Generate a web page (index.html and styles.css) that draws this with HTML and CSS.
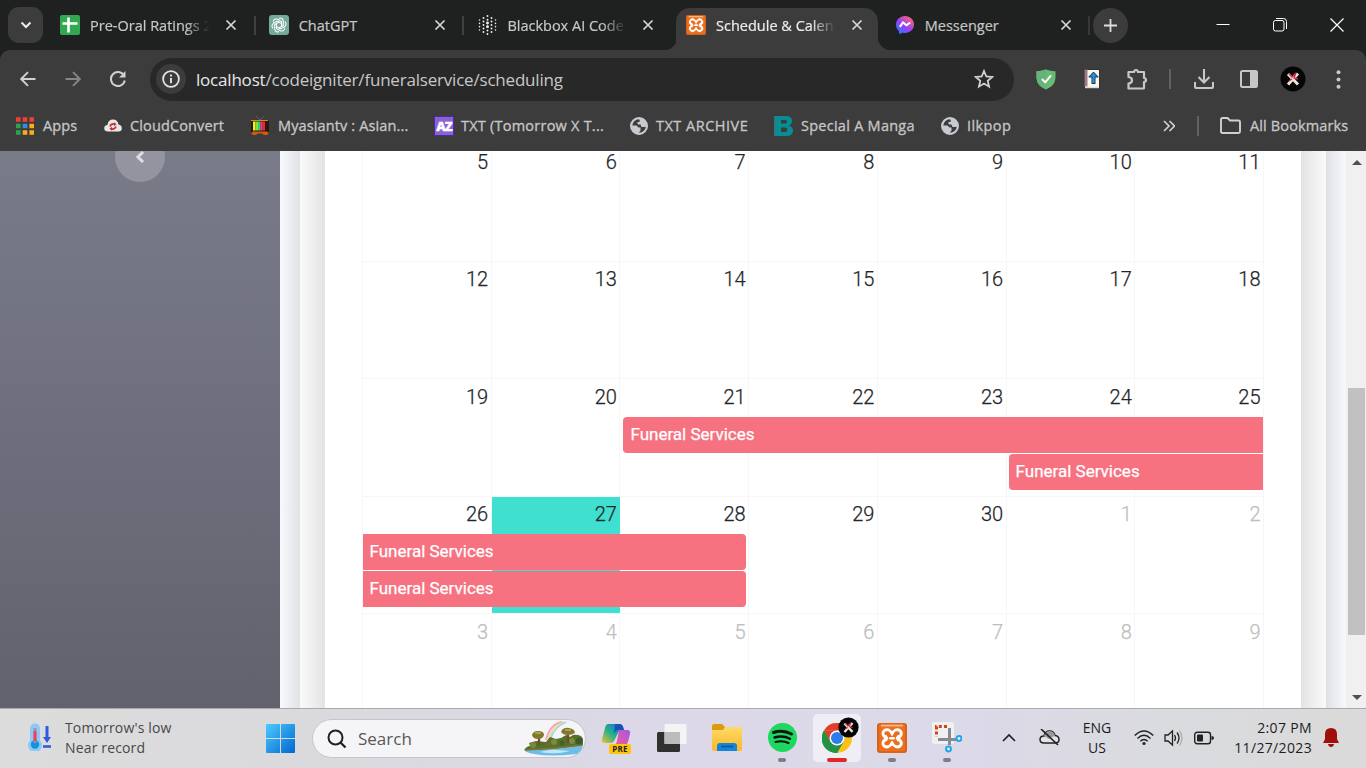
FILE: index.html
```
<!DOCTYPE html>
<html lang="en">
<head>
<meta charset="utf-8">
<title>Schedule &amp; Calendar</title>
<link rel="stylesheet" href="styles.css">
</head>
<body>
<svg width="0" height="0" class="defs">
  <defs>
    <linearGradient id="win" x1="0" y1="0" x2="1" y2="1"><stop offset="0" stop-color="#4ccaff"/><stop offset="1" stop-color="#0067cf"/></linearGradient>
    <linearGradient id="msg" x1="0" y1="1" x2=".8" y2="0"><stop offset="0" stop-color="#0a8cff"/><stop offset=".5" stop-color="#9a3dff"/><stop offset="1" stop-color="#ff6968"/></linearGradient>
    <linearGradient id="cop" x1="0" y1="1" x2="1" y2="0"><stop offset="0" stop-color="#f6c02c"/><stop offset=".45" stop-color="#27b08b"/><stop offset="1" stop-color="#1466d8"/></linearGradient>
    <linearGradient id="cop2" x1="0" y1="1" x2="1" y2="0"><stop offset="0" stop-color="#f0608d"/><stop offset="1" stop-color="#a855e8"/></linearGradient>
    <linearGradient id="fold" x1="0" y1="0" x2="0" y2="1"><stop offset="0" stop-color="#ffd966"/><stop offset="1" stop-color="#f7b92c"/></linearGradient>
    <symbol id="x" viewBox="0 0 12 12"><path d="M1.500 1.500l9 9M10.500 1.500l-9 9" stroke="#d8d8d8" stroke-width="1.700"/></symbol>
    <symbol id="xampp" viewBox="0 0 30 30"><rect width="30" height="30" rx="3" fill="#ed6f1e"/><rect x="1" y="1" width="28" height="28" rx="2" fill="none" stroke="#c95c15" stroke-width="1.200"/><path d="M4 2.500h22" stroke="#f8b27c" stroke-width="2"/><g fill="none" stroke-linecap="round" stroke-linejoin="round"><path d="M9.800 10.500L20.500 20.200M20.500 10.500L9.800 20.200" stroke="#fff" stroke-width="10.500"/><path d="M9.300 10.300h1.500l3 5-3 5H9.300M20.800 10.300h-1.500l-3 5 3 5h1.500" stroke="#ed6f1e" stroke-width="4"/><path d="M13.500 15.300h3.200" stroke="#fff" stroke-width="2.600"/></g></symbol>
    <symbol id="globe" viewBox="0 0 18 18"><circle cx="9" cy="9" r="7.900" fill="none" stroke="#c7cacf" stroke-width="2.200"/><path d="M9 1.500h4.500q3 2.500 3 6l-1 2.500h-4l-1-2.500H8L7 5.500l3-1zM1.500 8.500h5l2 2h2v3l-2.500 3.500Q1.500 15 1.500 8.500z" fill="#c7cacf"/></symbol>
    <symbol id="avatar" viewBox="0 0 26 26"><circle cx="13" cy="13" r="12.500" fill="#050505"/><path d="M8 8l10 10.500M18 7.500L8 18.500" stroke="#e9e5d8" stroke-width="3"/><path d="M9 8l3 3 4-4-2 5 4 1M9 15l3-2" fill="none" stroke="#d52b46" stroke-width="1.300"/></symbol>
  </defs>
</svg>
<div class="screen">
  <header class="tabs">
    <button class="tabsearch"><svg width="12" height="8" viewBox="0 0 12 8"><path d="M1.500 1.500L6 6l4.500-4.500" fill="none" stroke="#eee" stroke-width="2"/></svg></button>
    <div class="tab"><svg class="fav" viewBox="0 0 20 20"><rect width="20" height="20" rx="2" fill="#33a852"/><path d="M8.500 2.500v15M2.500 8.500h15" stroke="#fff" stroke-width="2.600"/></svg><span class="label t1">Pre-Oral Ratings 2</span><svg class="close"><use href="#x"/></svg></div>
    <div class="tab split"><svg class="fav" viewBox="0 0 20 20"><rect width="20" height="20" rx="3" fill="#74aa9c"/><g fill="none" stroke="#fff" stroke-width="1.050"><path d="M10 3.200q3.500-.8 4.300 2.800v4.500L10 13"/><path d="M10 3.200q3.500-.8 4.300 2.800v4.500L10 13" transform="rotate(60 10 10)"/><path d="M10 3.200q3.500-.8 4.300 2.800v4.500L10 13" transform="rotate(120 10 10)"/><path d="M10 3.200q3.500-.8 4.300 2.800v4.500L10 13" transform="rotate(180 10 10)"/><path d="M10 3.200q3.500-.8 4.300 2.800v4.500L10 13" transform="rotate(240 10 10)"/><path d="M10 3.200q3.500-.8 4.300 2.800v4.500L10 13" transform="rotate(300 10 10)"/></g></svg><span class="label t2">ChatGPT</span><svg class="close"><use href="#x"/></svg></div>
    <div class="tab split"><svg class="fav dots" viewBox="0 0 20 20"><g fill="none" stroke="#eee" stroke-linecap="round"><path d="M10.500 1v18.500" stroke-width="1.900" stroke-dasharray=".1 3.500"/><path d="M6.500 3v15M14.500 3v15" stroke-width="1.900" stroke-dasharray=".1 3.400"/><path d="M2.500 5v11M18.500 5v11" stroke-width="1.500" stroke-dasharray=".1 3.200"/><path d="M10.500 8v4" stroke-width="2.800" stroke-dasharray=".1 3.500"/></g></svg><span class="label t3">Blackbox AI Code</span><svg class="close"><use href="#x"/></svg></div>
    <div class="tab active"><svg class="fav"><use href="#xampp"/></svg><span class="label t4">Schedule &amp; Calen</span><svg class="close"><use href="#x"/></svg></div>
    <div class="tab"><svg class="fav" viewBox="0 0 20 20"><path d="M10 1c5 0 9 3.600 9 8.500S15 18 10 18l-2.500-.3L4 19v-2.800C2 14.500 1 12.300 1 9.500 1 4.600 5 1 10 1z" fill="url(#msg)"/><path d="M4.800 11.800L8 7.500l3.500 2.800L15.200 7.500" fill="none" stroke="#fff" stroke-width="2"/></svg><span class="label t5">Messenger</span><svg class="close"><use href="#x"/></svg></div>
    <i class="sep"></i>
    <button class="newtab"><svg width="13" height="13" viewBox="0 0 13 13"><path d="M6.500 0v13M0 6.500h13" stroke="#ddd" stroke-width="1.800"/></svg></button>
    <div class="winctl">
      <svg width="14" height="14" viewBox="0 0 14 14"><path d="M.5 6.500h13" stroke="#fff"/></svg>
      <svg width="14" height="14" viewBox="0 0 14 14"><rect x=".5" y="2.500" width="10.500" height="10.500" rx="2" fill="none" stroke="#fff"/><path d="M3 .5h7.500q3 0 3 3V11" fill="none" stroke="#fff"/></svg>
      <svg width="14" height="14" viewBox="0 0 14 14"><path d="M.5.5l13 13M13.500.5l-13 13" stroke="#fff" stroke-width="1.200"/></svg>
    </div>
  </header>

  <div class="toolbar">
    <svg class="nav" viewBox="0 0 16 16"><path d="M15.500 8H1.500M8 1.200L1.200 8 8 14.800" fill="none" stroke="#d0d0d0" stroke-width="1.900"/></svg>
    <svg class="nav" viewBox="0 0 16 16"><path d="M.5 8h14M8 1.200L14.800 8 8 14.800" fill="none" stroke="#858585" stroke-width="1.900"/></svg>
    <svg class="nav" viewBox="0 0 16 16"><path d="M14 4.500A7 7 0 1 0 14.800 9.500" fill="none" stroke="#d0d0d0" stroke-width="2"/><path d="M15.500 0v6.500H9z" fill="#d0d0d0"/></svg>
    <div class="omni">
      <span class="info"><svg width="18" height="18" viewBox="0 0 18 18"><circle cx="9" cy="9" r="7.900" fill="none" stroke="#e4e4e4" stroke-width="1.800"/><path d="M9 8v5.200M9 4.600v2" stroke="#e4e4e4" stroke-width="1.900"/></svg></span>
      <span class="url"><b>localhost</b>/codeigniter/funeralservice/scheduling</span>
      <svg class="star" width="20" height="20" viewBox="0 0 20 20"><path d="M10 2l2.300 5.500 6 .5-4.600 3.900 1.400 5.800-5.100-3.100-5.100 3.100 1.400-5.800L1.700 8l6-.5z" fill="none" stroke="#d0d0d0" stroke-width="1.800"/></svg>
    </div>
    <div class="exts">
      <svg class="x1" width="20" height="21" viewBox="0 0 20 21"><path d="M10 .5Q15 2.500 19.500 2.300V9q-.5 8-9.500 11.500Q1 17 .5 9V2.300Q5 2.500 10 .5z" fill="#68bc71"/><path d="M10 .5v20Q1 17 .5 9V2.300Q5 2.500 10 .5z" fill="#67b279"/><path d="M6 10l3.200 3.300 5.800-7" fill="none" stroke="#fff" stroke-width="1.900"/></svg>
      <svg class="x2" width="16" height="21" viewBox="0 0 16 21"><rect x=".5" y=".5" width="15" height="19" fill="#fdf6e6" stroke="#30303a"/><path d="M.5.500h3v17h-3z" fill="#9c7b84"/><path d="M1 18.500h14" stroke="#ddd" stroke-width="1.500"/><path d="M9.500 15V6" stroke="#123a66" stroke-width="4"/><path d="M4.800 8L9.500 3l4.700 5z" fill="#2189d8" stroke="#123a66"/><path d="M9.500 14V6" stroke="#2493e5" stroke-width="2.200"/></svg>
      <svg class="x3" width="22" height="22" viewBox="0 0 22 22"><path d="M2.500 4H8q.3-2 2-2t2 2h6v6q2 .3 2 2t-2 2v6q0 .5-.5.500h-15v-5q3.500-.5 3.500-3.300T2.500 9z" fill="none" stroke="#c7c7c7" stroke-width="2.200" stroke-linejoin="round"/></svg>
      <i class="bar x4"></i>
      <svg class="x5" width="20" height="20" viewBox="0 0 20 20"><path d="M10 0v13M4.500 8l5.500 5.500L15.500 8M1 13v4.500q0 1.500 1.500 1.500h15q1.500 0 1.500-1.500V13" fill="none" stroke="#c7c7c7" stroke-width="2.100"/></svg>
      <svg class="x6" width="18" height="18" viewBox="0 0 18 18"><rect x="1" y="1" width="16" height="16" rx="1.500" fill="none" stroke="#c7c7c7" stroke-width="2"/><path d="M10 1h7v16h-7z" fill="#c7c7c7"/></svg>
      <svg class="x7" width="26" height="26"><use href="#avatar"/></svg>
      <svg class="x8" width="5" height="19" viewBox="0 0 5 19"><g fill="#c7c7c7"><circle cx="2.500" cy="2.300" r="2"/><circle cx="2.500" cy="9.500" r="2"/><circle cx="2.500" cy="16.700" r="2"/></g></svg>
    </div>
  </div>

  <nav class="marks">
    <span class="bm b1"><svg width="18" height="18" viewBox="0 0 18 18"><path d="M0 2.500h18" stroke="#ee4037" stroke-width="4.400" stroke-dasharray="4.600 2.100"/><path d="M0 9h4.600M0 15.500h4.600" stroke="#2ba24c" stroke-width="4.400"/><path d="M6.700 9h4.600" stroke="#2c8cf4" stroke-width="4.400"/><path d="M13.400 9H18M6.700 15.500H18" stroke="#fbad17" stroke-width="4.400" stroke-dasharray="4.600 2.100"/></svg><span class="bt">Apps</span></span>
    <span class="bm b2"><svg width="18" height="13" viewBox="0 0 18 13"><path d="M3.500 12.500Q0 12 .2 9 .5 6 3.500 6 4 .5 9 .5q4.500 0 5.500 5 3.300.5 3.300 3.700 0 3.300-3.300 3.300z" fill="#e8e8e8"/><path d="M6 7.500Q7 4.500 10.500 5M12 7.500q-1 3-4.500 2.500" fill="none" stroke="#cc292d" stroke-width="1.600"/><path d="M10 3.300l2.500 2-2.500 2zM8 7.800L5.500 9.800l2.500 2z" fill="#cc292d"/></svg><span class="bt">CloudConvert</span></span>
    <span class="bm b3"><svg width="18" height="20" viewBox="0 0 18 20"><path d="M5 0l4 4 4-3.500" fill="none" stroke="#4f6472"/><rect y="4" width="18" height="13" rx="1.500" fill="#2a1808"/><path d="M0 4.500h17" stroke="#d98820"/><path d="M2 5.500h2.500v9H2z" fill="#f1ef24"/><path d="M4.500 5.500H7v9H4.500z" fill="#7be03a"/><path d="M7 5.500h2.200v9H7z" fill="#2fd06c"/><path d="M9.200 5.500h2.500v9H9.200z" fill="#e03a96"/><path d="M11.700 5.500H14v9h-2.300z" fill="#e32b2b"/><path d="M0 17l2-1.500h14l2 1.500-2 2h-3l-2-1.500H7L5 19H2z" fill="#ce5a16"/></svg><span class="bt">Myasiantv : Asian...</span></span>
    <span class="bm b4"><i class="az">AZ</i><span class="bt">TXT (Tomorrow X T...</span></span>
    <span class="bm b5"><svg width="18" height="18"><use href="#globe"/></svg><span class="bt">TXT ARCHIVE</span></span>
    <span class="bm b6"><svg width="20" height="20" viewBox="0 0 20 20"><path d="M1 0h12q6 0 6 5 0 3-3 4.500 4 1.500 4 5 0 5.500-7 5.500H1z" fill="#058f94"/><path d="M1.500 0v20" stroke="#486b70"/><path d="M8 4h4q2 0 2 1.800T12 7.500H8zM8 11.500h4q2.500 0 2.500 2.200T12 16H8z" fill="#3c3c3c"/></svg><span class="bt">Special A Manga</span></span>
    <span class="bm b7"><svg width="18" height="18"><use href="#globe"/></svg><span class="bt">Ilkpop</span></span>
    <svg class="more" width="12" height="12" viewBox="0 0 12 12"><path d="M1 1l5 5-5 5M6.500 1l5 5-5 5" fill="none" stroke="#d0d0d0" stroke-width="1.700"/></svg>
    <i class="bar"></i>
    <span class="bm b8"><svg width="21" height="17" viewBox="0 0 21 17"><path d="M1 2.500Q1 1 2.500 1h5L10 3.500h8.500q1.500 0 1.500 1.500v9.500q0 1.500-1.500 1.500h-16Q1 16 1 14.500z" fill="none" stroke="#d0d0d0" stroke-width="1.900"/></svg><span class="bt">All Bookmarks</span></span>
  </nav>

  <main class="page">
    <aside class="side"><span class="toggle"><svg width="10" height="12" viewBox="0 0 10 12"><path d="M8 1L3 6l5 5" fill="none" stroke="#dcdce2" stroke-width="3"/></svg></span></aside>
    <div class="edge e1"></div><div class="edge e2"></div>
    <section class="card">
      <div class="cal">
        <div class="week"><span>5</span><span>6</span><span>7</span><span>8</span><span>9</span><span>10</span><span>11</span></div>
        <div class="week"><span>12</span><span>13</span><span>14</span><span>15</span><span>16</span><span>17</span><span>18</span></div>
        <div class="week"><span>19</span><span>20</span><span>21</span><span>22</span><span>23</span><span>24</span><span>25</span>
          <div class="ev from3 starts">Funeral Services</div><div class="ev from6 starts second">Funeral Services</div></div>
        <div class="week tight"><span>26</span><span class="today">27</span><span>28</span><span>29</span><span>30</span><span class="out">1</span><span class="out">2</span>
          <div class="ev first3 ends">Funeral Services</div><div class="ev first3 ends second">Funeral Services</div></div>
        <div class="week"><span class="out">3</span><span class="out">4</span><span class="out">5</span><span class="out">6</span><span class="out">7</span><span class="out">8</span><span class="out">9</span></div>
      </div>
    </section>
    <div class="edge e3"></div><div class="edge e4"></div>
    <div class="scroll"><svg width="10" height="5"><path d="M0 5l5-5 5 5z" fill="#505050"/></svg><i></i><svg width="10" height="5"><path d="M0 0l5 5 5-5z" fill="#505050"/></svg></div>
  </main>

  <footer class="task">
    <div class="weather"><svg width="24" height="28" viewBox="0 0 24 28"><path d="M2 5.500a5 5 0 0 1 10 0v12a7 7 0 1 1-10 0z" fill="#8cc8f8"/><circle cx="7" cy="21.500" r="4.200" fill="#1192dc"/><path d="M7 5v15" stroke="#8a9ab8" stroke-width="3"/><path d="M7 8v10" stroke="#f0405c" stroke-width="3"/><path d="M19 3v13" stroke="#2f5be0" stroke-width="3"/><path d="M15 14h8l-4 6z" fill="#2f5be0"/><path d="M15 23.500h8" stroke="#2f5be0" stroke-width="2.600"/></svg><div class="wt"><p class="w1">Tomorrow's low</p><p class="w2">Near record</p></div></div>
    <svg class="win" width="29" height="29" viewBox="0 0 29 29"><path d="M0 1q0-1 1-1h13v14H0zM15 0h13q1 0 1 1v13H15zM0 15h14v14H1q-1 0-1-1zM15 15h14v13q0 1-1 1H15z" fill="url(#win)"/></svg>
    <div class="search"><svg width="20" height="20" viewBox="0 0 20 20"><circle cx="8.500" cy="8.500" r="7" fill="none" stroke="#222" stroke-width="2"/><path d="M13.500 13.500l5 5" stroke="#222" stroke-width="2.300"/></svg><span>Search</span>
      <svg class="island" width="61" height="35" viewBox="0 0 61 35"><g fill="none" stroke-width="1.800"><path d="M23 19Q27 3 39 1" stroke="#f4a3b8"/><path d="M25 19Q29 5 41 1" stroke="#f3dd83"/><path d="M27 19Q31 6 43 1" stroke="#97d8ec"/></g><path d="M1 29q25-3 59-5-1 6-6 9-27 3-43 0-7-1-10-4z" fill="#6fbce6"/><path d="M17 31q10-3 18-2l12 1q-14 4-30 1z" fill="#c0e9f8"/><path d="M1 29q3-4 6-4l-1-3 7-2 10 1 4-5 6 2 5-1 5-3 4 2 3-2q8-1 10 4v6q-30 5-59 5z" fill="#53712d"/><path d="M2 29q28-1 57-5" stroke="#7d7430" stroke-width="1.300" fill="none"/><path d="M16 24V13M45 22V10" stroke="#754922" stroke-width="2.300"/><path d="M9 14q1-4 6-4 6 0 6 4-1 4-6 4-5 0-6-4zM38 11q2-5 8-4 6 1 6 5-3 2-7 2-5 0-7-3z" fill="#80792c"/><path d="M12 12h6M42 9h6" stroke="#a5a14d" stroke-width="2"/><circle cx="31" cy="21" r="3" fill="#7f8a3a"/><circle cx="25" cy="23" r="2.500" fill="#6d6b2c"/><circle cx="49" cy="20" r="3" fill="#7e8a3c"/><circle cx="39" cy="22" r="2.500" fill="#456225"/><circle cx="56" cy="20" r="3.500" fill="#3e5a25"/><circle cx="10" cy="24" r="3" fill="#7c853a"/></svg></div>
    <div class="apps">
      <div class="app"><svg width="30" height="29" viewBox="0 0 30 29"><path d="M6 1h11q3 0 4 4l1 3h-5l-5 10q-1 2-3 2H3q-4 0-3-4L3 5q1-4 3-4z" fill="url(#cop)"/><path d="M13 1h5q3 0 4 6h-5q-4 0-5 4z" fill="#1650b8"/><path d="M17 7h8q4 0 3 4l-2 8q-1 3-4 3H12q2 0 3-4z" fill="url(#cop2)"/></svg><b class="pre">PRE</b></div>
      <div class="app"><svg width="30" height="30" viewBox="0 0 30 30"><rect y="9" width="23" height="20" rx="1.500" fill="#303030"/><rect x="7.500" y="1" width="22" height="20" rx="1" fill="#f5f5f5" fill-opacity=".93"/><path d="M7.500 9H23v12H7.500z" fill="#bcbcbc"/></svg></div>
      <div class="app"><svg width="30" height="28" viewBox="0 0 30 28"><path d="M0 2q0-2 2-2h8l3 3h15v7H0z" fill="#db9b10"/><path d="M0 6h11l2-3h15q2 0 2 2v20q0 2-2 2H2q-2 0-2-2z" fill="url(#fold)"/><path d="M5 27v-5q0-3 3-3h14q3 0 3 3v5z" fill="#1683d6"/><path d="M9 22.500h12" stroke="#0a569b" stroke-width="1.500"/></svg></div>
      <div class="app run"><svg width="29" height="29" viewBox="0 0 29 29"><circle cx="14.500" cy="14.500" r="14.500" fill="#1ed760"/><g fill="none" stroke="#111" stroke-linecap="round"><path d="M5.500 9.500Q15 6.500 23.500 11" stroke-width="2.900"/><path d="M6.500 14.500q8.500-2.500 15.500 1.200" stroke-width="2.400"/><path d="M7.500 19q7-2 13 1" stroke-width="2"/></g></svg></div>
      <div class="app on"><svg width="30" height="30" viewBox="0 0 30 30"><circle cx="15" cy="15" r="15" fill="#fbc116"/><path d="M2 7.500A15 15 0 0 1 28 7.500H15z" fill="#e33b2e"/><path d="M2 7.500A15 15 0 0 0 15 30l6.500-11.300L8.500 18.700z" fill="#229342"/><path d="M15 7.500H2l6.500 11.200z" fill="#e33b2e"/><path d="M2 7.500l6.500 11.200 6.500 3 6.500-3L15 30Q-1 28 0 14q.3-4 2-6.500z" fill="#229342"/><circle cx="15" cy="15" r="7.500" fill="#fff"/><circle cx="15" cy="15" r="6" fill="#2e7bea"/></svg><svg class="badge" width="21" height="21"><use href="#avatar"/></svg></div>
      <div class="app run"><svg width="30" height="30"><use href="#xampp"/></svg></div>
      <div class="app run"><svg width="30" height="31" viewBox="0 0 30 31"><rect width="22" height="22" rx="2" fill="#f0f0f0"/><path d="M15 4.500H4.500V15" fill="none" stroke="#d8401c" stroke-width="3" stroke-dasharray="3 2.200"/><path d="M17.500 6v17M6 17.500h18" stroke="#858b93" stroke-width="3"/><circle cx="16.500" cy="27" r="2.400" fill="#dff2fc" stroke="#22a5e8" stroke-width="2"/><circle cx="27" cy="16.500" r="2.400" fill="#dff2fc" stroke="#22a5e8" stroke-width="2"/></svg></div>
    </div>
    <div class="tray">
      <svg class="up" width="14" height="9" viewBox="0 0 14 9"><path d="M1 8l6-6 6 6" fill="none" stroke="#222" stroke-width="1.700"/></svg>
      <svg class="cloud" width="21" height="17" viewBox="0 0 21 17"><path d="M5 14Q1 14 1 10.500T5 7q1-5 5.500-5T16 6.500q4 .5 4 4T16 14z" fill="#e4e4e8" stroke="#222" stroke-width="1.500"/><path d="M5 7q1-5 5.500-5T16 6.500L10 10z" fill="#999"/><path d="M2 0l17 16" stroke="#222" stroke-width="1.700"/></svg>
      <div class="lang"><p class="l1">ENG</p><p class="l2">US</p></div>
      <svg class="wifi" width="20" height="16" viewBox="0 0 20 16"><g fill="none" stroke="#222" stroke-width="1.400"><path d="M.7 5.500q9.300-9 18.600 0M3.500 8.500q6.500-6.300 13 0M6.300 11.300q3.700-3.500 7.400 0"/></g><circle cx="10" cy="13.500" r="1.600" fill="#222"/></svg>
      <svg class="vol" width="20" height="18" viewBox="0 0 20 18"><path d="M1 6h3l4.500-4v14L4 12H1z" fill="none" stroke="#222" stroke-width="1.300"/><path d="M10.500 6q2 3 0 6M13 3.500q4 5.500 0 11" fill="none" stroke="#222" stroke-width="1.300"/><path d="M15.500 1.500q5 7.500 0 15" fill="none" stroke="#aaa" stroke-width="1.200"/></svg>
      <svg class="bat" width="20" height="14" viewBox="0 0 20 14"><rect x=".7" y="1.200" width="15.800" height="11.500" rx="2.500" fill="none" stroke="#222" stroke-width="1.400"/><rect x="3" y="3.500" width="6" height="7" rx="1" fill="#222"/><path d="M17.500 5q2.500 0 2.500 2t-2.500 2z" fill="#222"/></svg>
      <div class="clock"><p class="c1">2:07 PM</p><p class="c2">11/27/2023</p></div>
      <svg class="bell" width="16" height="19" viewBox="0 0 16 19"><path d="M8 0q6 0 6 6v5l2 4H0l2-4V6q0-6 6-6z" fill="#a10f0b"/><path d="M5 16h6q-.5 3-3 3t-3-3z" fill="#a10f0b"/></svg>
    </div>
  </footer>
</div>
</body>
</html>
```
FILE: styles.css
```
* { box-sizing: border-box; }
body { margin: 0; background: #fff; }
p { margin: 0; }
svg { display: block; flex: none; }
.defs { position: absolute; }
button { border: 0; padding: 0; background: #3c3c3c; display: grid; place-items: center; flex: none; }
.screen { width: 1366px; height: 768px; overflow: hidden; display: flex; flex-direction: column; background: #1f2120; font-family: "Open Sans", "Noto Sans", sans-serif; color: #c7c7c7; }

.tabs { height: 50px; flex: none; display: flex; align-items: center; padding-left: 8px; }
.tabsearch { width: 35px; height: 36px; border-radius: 11px; margin-right: 8px; }
.tab { width: 208.700px; height: 42px; align-self: flex-end; padding: 0 14px 8px 9px; display: flex; align-items: center; flex: none; position: relative; }
.fav { width: 20px; height: 20px; margin-right: 10px; }
.label { width: 122px; padding-top: 2px; font-size: 14.500px; line-height: 20px; white-space: nowrap; -webkit-text-stroke: .2px currentColor; }
.t1, .t3, .t4 { mask-image: linear-gradient(90deg, #000 78%, transparent 98%); }
.close { width: 12px; height: 12px; margin-left: 13px; }
.split::before { content: ""; position: absolute; left: -6px; top: 8px; width: 2px; height: 19px; background: #414141; }
.active { color: #ececec; }
.active::before { content: ""; position: absolute; z-index: 0; left: -13px; right: -5px; top: 0; bottom: 0; background: radial-gradient(circle at 0 0, transparent 13px, #3c3c3c 13.500px) left bottom / 13px 13px no-repeat, radial-gradient(circle at 100% 0, transparent 13px, #3c3c3c 13.500px) right bottom / 13px 13px no-repeat; }
.active::after { content: ""; position: absolute; z-index: 0; left: -1px; right: 8px; top: 0; bottom: 0; background: #3c3c3c; border-radius: 14px 14px 0 0; }
.active > * { position: relative; z-index: 1; }
.sep { width: 2px; height: 19px; margin-left: -6px; background: #363837; }
.newtab { width: 35px; height: 35px; border-radius: 50%; margin-left: 3px; }
.winctl { margin-left: auto; display: flex; gap: 43px; padding-right: 22px; }

.toolbar { height: 58px; flex: none; background: #3c3c3c; border-radius: 10px 10px 0 0; display: flex; align-items: center; padding-left: 20px; }
.nav { width: 16px; height: 16px; margin-right: 29px; }
.omni { width: 864px; height: 43px; border-radius: 22px; background: #282828; margin-left: -5px; display: flex; align-items: center; padding: 0 20px 0 6px; flex: none; }
.info { width: 30px; height: 30px; border-radius: 50%; background: #3c3c3c; display: grid; place-items: center; margin-right: 10px; }
.url { font-size: 17px; letter-spacing: -.2px; line-height: 24px; padding-top: 1px; white-space: nowrap; }
.url b { font-weight: 400; color: #e8e8e8; }
.star { margin-left: auto; }
.exts { display: flex; align-items: center; }
.x1 { margin-left: 22px; } .x2 { margin-left: 28px; } .x3 { margin-left: 26px; } .x4 { margin-left: 21px; } .x5 { margin-left: 23px; } .x6 { margin-left: 26px; } .x7 { margin-left: 22px; } .x8 { margin-left: 30px; }
.bar { width: 2px; height: 20px; background: #606060; }

.marks { height: 43px; flex: none; background: #3c3c3c; display: flex; align-items: center; padding: 0 18px 8px 16px; font-size: 14.500px; letter-spacing: .13px; line-height: 20px; white-space: nowrap; -webkit-text-stroke: .3px currentColor; }
.bm { display: flex; align-items: center; flex: none; }
.bm svg, .az { margin-right: 8px; }
.b1 { width: 88px; } .b2 { width: 147px; } .b3 { width: 183px; } .b4 { width: 196px; letter-spacing: .23px; } .b5 { width: 143px; letter-spacing: .5px; } .b6 { width: 168px; letter-spacing: .26px; } .b7 { width: 80px; letter-spacing: .4px; }
.b1 svg { margin-right: 9px; }
.b3 svg { margin-right: 9px; }
.b4 .az { margin-right: 7px; }
.az { width: 20px; height: 20px; border: 1px solid #4b27b2; background: #8a62d2; color: #fff; font: 800 13px/18px "Open Sans", sans-serif; text-align: center; letter-spacing: -1px; }
.more { margin-left: auto; margin-right: 22px; }
.b8 { margin-left: 21px; width: 128px; }
.b8 svg { margin-right: 9px; }

.page { height: 557px; flex: none; display: flex; overflow: hidden; background: #fff; }
.side { width: 280px; background: linear-gradient(#7a7b89, #62626f); }
.toggle { width: 50px; height: 50px; margin: -19px 0 0 115px; border-radius: 50%; background: rgba(255,255,255,.2); display: grid; place-items: center; }
.edge { flex: none; }
.e1 { width: 20px; background: linear-gradient(90deg, #f8f9fd, #e0e2e6); }
.e2 { width: 25px; background: linear-gradient(90deg, #fafafa, #e3e3e3); }
.e3 { width: 25px; background: linear-gradient(90deg, #e3e3e3, #fafafa); }
.e4 { width: 20px; background: linear-gradient(90deg, #dfe1e5, #f8f9fd); }
.card { width: 976px; padding: 0 37px; background: #fff; }
.cal { margin-top: -6.500px; width: 902px; border-left: 1px solid #f7f7f7; font-family: Roboto, sans-serif; }
.week { height: 117.400px; display: grid; grid-template-columns: repeat(7, 1fr); grid-template-rows: 37px 36px 36px 1fr; row-gap: 1px; border-bottom: 1px solid #f7f7f7; }
.tight { grid-template-rows: 36.200px 36px 36px 1fr; }
.week span { grid-row: 1 / -1; border-right: 1px solid #f7f7f7; padding: 5.600px 2.500px 0 0; font-size: 20px; font-weight: 300; -webkit-text-stroke: .25px currentColor; line-height: 24px; color: #212529; text-align: right; }
.week span:nth-of-type(1) { grid-column: 1; } .week span:nth-of-type(2) { grid-column: 2; } .week span:nth-of-type(3) { grid-column: 3; } .week span:nth-of-type(4) { grid-column: 4; } .week span:nth-of-type(5) { grid-column: 5; } .week span:nth-of-type(6) { grid-column: 6; } .week span:nth-of-type(7) { grid-column: 7; }
.week .out { color: #bcbebf; }
.week .today { background: #40e0d0; border-right-color: #40e0d0; }
.ev { grid-row: 2; background: #f77281; color: #fff; font-size: 17px; font-weight: 400; -webkit-text-stroke: .25px currentColor; line-height: 34px; padding-left: 7px; z-index: 1; }
.second { grid-row: 3; }
.starts { border-radius: 4px 0 0 4px; margin: 0 1px 0 3px; }
.ends { border-radius: 0 4px 4px 0; margin-right: 3px; padding-left: 6.500px; }
.from3 { grid-column: 3 / 8; } .from6 { grid-column: 6 / 8; margin-left: 2px; } .first3 { grid-column: 1 / 4; }
.scroll { width: 20px; background: #f0f0f0; display: flex; flex-direction: column; align-items: center; padding: 9px 0 8px 1px; }
.scroll i { width: 17px; height: 247px; background: #c1c1c1; margin-top: 223px; margin-bottom: auto; }

.task { height: 60px; flex: none; border-top: 1px solid #aaabad; background: linear-gradient(90deg, #dcdcdc 0, #dadade 25%, #dcd8e8 48%, #dcd9e9 70%, #dadbdf 85%, #dadada 100%); color: #484848; display: flex; align-items: center; position: relative; }
.weather { width: 266px; padding-left: 28px; display: flex; align-items: center; gap: 13px; }
.weather svg { margin-top: -4px; }
.wt { font-size: 14px; line-height: 20px; letter-spacing: .15px; white-space: nowrap; padding-bottom: 2px; }
.search { width: 274px; height: 39px; margin-left: 17px; border-radius: 20px; background: #f5f5f8; border: 1px solid #c4c4cb; display: flex; align-items: center; padding: 0 1px 0 14px; gap: 11px; font-size: 17px; color: #585858; }
.island { margin-left: auto; }
.apps { display: flex; gap: 7px; margin-left: 7px; padding-bottom: 2px; }
.app { width: 48px; height: 48px; border-radius: 5px; display: grid; place-items: center; position: relative; }
.run::after, .on::after { content: ""; position: absolute; bottom: 0; left: 20px; width: 8px; height: 4px; border-radius: 2px; background: #7f7d88; }
.on { background: #f0eef5; }
.on::after { left: 14px; width: 20px; background: #e22525; }
.badge { position: absolute; right: 2px; top: 3px; }
.pre { position: absolute; left: 16px; bottom: 8px; width: 22px; height: 10px; border-radius: 2px; background: #ffc40c; color: #222; font-size: 8px; line-height: 10px; text-align: center; letter-spacing: .3px; }
.tray { margin-left: 31px; padding-bottom: 2px; display: flex; align-items: center; color: #1d1d1d; font-size: 14px; line-height: 20px; white-space: nowrap; flex: 1; }
.cloud { margin-left: 23px; }
.lang { width: 30px; margin-left: 22px; text-align: center; padding-top: 1px; }
.wifi { margin-left: 22px; } .vol { margin-left: 10px; } .bat { margin-left: 10px; }
.clock { width: 84px; margin-left: 14px; text-align: right; letter-spacing: .35px; }
.bell { margin-left: 11px; }
```
